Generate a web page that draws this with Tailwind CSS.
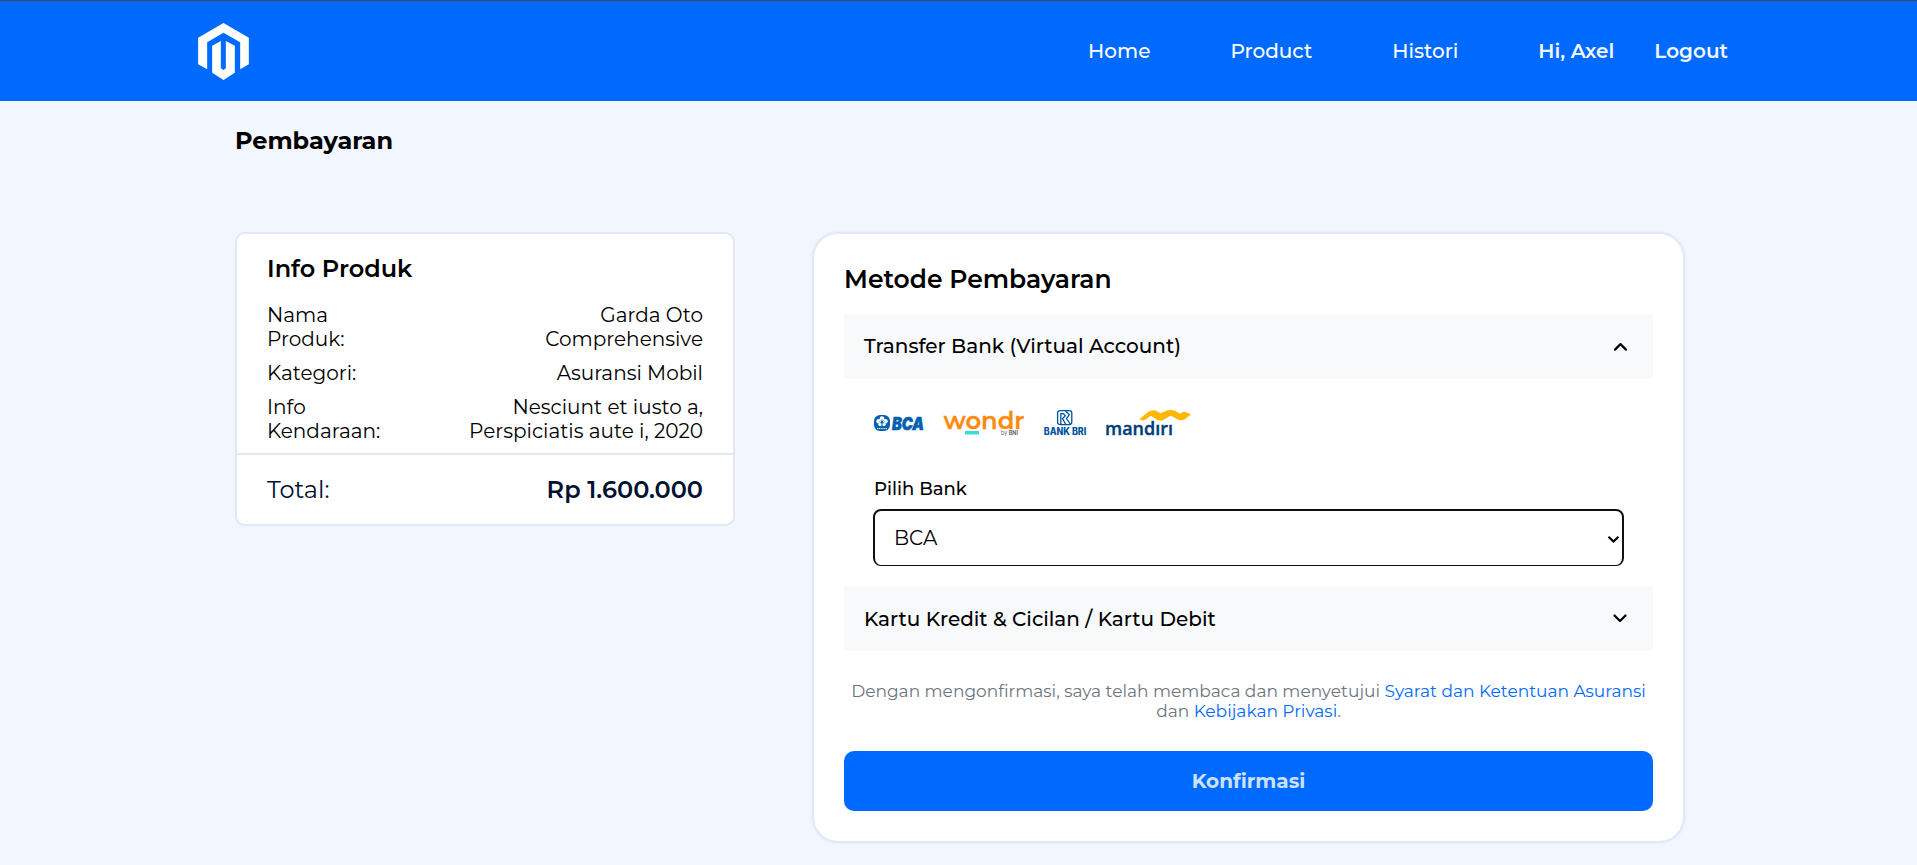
<!DOCTYPE html>
<html lang="id">
<head>
<meta charset="utf-8">
<title>Pembayaran</title>
<script src="https://cdn.jsdelivr.net/npm/@tailwindcss/browser@4"></script>
</head>
<body class="min-h-screen bg-[#f1f6ff] font-['Montserrat','Inter',sans-serif] text-black overflow-hidden">
<header class="h-[101px] bg-[#006aff] border-t border-[#444a52] flex items-center justify-between pl-[198px] pr-[189px]">
  <svg class="w-[51px] h-[57px]" viewBox="54 69 152 171" fill="#fff"><path d="M130 69 206 113V193L180 208V127L130 98 81 127V208L54 193V113Z"/><path d="M96 137 122 123V205L130 210 137 205V123L164 137V218L130 240 96 218Z"/></svg>
  <nav class="flex items-center gap-20 text-[20px] font-medium text-white">
    <a>Home</a><a>Product</a><a>Histori</a>
    <div class="flex gap-10 font-semibold text-[#f1f6ff]"><a>Hi, Axel</a><a>Logout</a></div>
  </nav>
</header>
<main class="px-[235px]">
  <h1 class="pt-[25px] h-[131px] text-[24px] leading-[30px] font-bold">Pembayaran</h1>
  <div class="flex items-start gap-[77px]">
    <section class="shrink-0 w-[500px] h-[294px] bg-white border-2 border-[#e2e8f3] rounded-[10px]">
      <div class="px-[30px] pt-5 h-[219px]">
        <h2 class="text-[24px] leading-[30px] font-semibold mb-[19px]">Info Produk</h2>
        <div class="flex flex-col gap-2.5 text-[20px] leading-6">
          <div class="flex justify-between"><div>Nama<br>Produk:</div><div class="text-right">Garda Oto<br>Comprehensive</div></div>
          <div class="flex justify-between"><div>Kategori:</div><div class="text-right">Asuransi Mobil</div></div>
          <div class="flex justify-between"><div>Info<br>Kendaraan:</div><div class="text-right">Nesciunt et iusto a,<br>Perspiciatis aute i, 2020</div></div>
        </div>
      </div>
      <div class="h-[71px] border-t-2 border-[#e2e8f3] px-[30px] flex items-center justify-between text-[24px] text-[#001230]"><span>Total:</span><span class="font-semibold">Rp 1.600.000</span></div>
    </section>
    <section class="shrink-0 w-[873px] h-[611px] bg-white border-2 border-[#e2e9f4] rounded-[26px] shadow-[0_0_3px_#e2e8f3] px-[30px] pt-[30px]">
      <h2 class="text-[25px] leading-[30px] font-semibold mb-5">Metode Pembayaran</h2>
      <div class="h-[65px] bg-[#f8f9fb] flex items-center justify-between pl-5 pr-[25px] text-[20px] font-medium"><span class="pb-0.5">Transfer Bank (Virtual Account)</span>
        <svg class="w-[15px] h-[10px]" viewBox="0 0 15 10" fill="none" stroke="#000" stroke-width="2.200" stroke-linecap="round" stroke-linejoin="round"><path d="M2 7.600 7.500 2.100 13 7.600"/></svg></div>
      <div class="h-[207px] px-[29px] pt-[31px]">
        <div class="flex items-start gap-5 h-[25px] pl-px">
          <svg class="w-[50px] h-[25px] overflow-visible" viewBox="0 0 50 25"><rect y="5" width="16" height="16" rx="6" fill="#0060af"/><g fill="#fff"><circle cx="8" cy="8.600" r="2.300"/><circle cx="4.600" cy="11.200" r="2.300"/><circle cx="11.400" cy="11.200" r="2.300"/><circle cx="6.200" cy="14.300" r="1.900"/><circle cx="9.800" cy="14.300" r="1.900"/></g><path d="M8 9v8M5.300 11.300 8 14.500l2.700-3.200" fill="none" stroke="#0060af" stroke-width=".6"/><path d="M3 18.600h10" stroke="#fff" stroke-width="1" stroke-dasharray="1.200 .6"/><text x="18" y="19.600" font-family="Inter" font-weight="900" font-style="italic" font-size="17" fill="#0060af" stroke="#0060af" stroke-width=".6" textLength="32" lengthAdjust="spacingAndGlyphs">BCA</text></svg>
          <svg class="w-[80px] h-[25px] overflow-visible" viewBox="0 0 80 25"><text x="-.5" y="18.500" font-family="Montserrat" font-weight="600" font-size="24.500" fill="#ff8a0f" stroke="#ff8a0f" stroke-width=".3" textLength="81" lengthAdjust="spacingAndGlyphs">wondr</text><rect x="21" y="21" width="14" height="3.500" fill="#40dcd3"/><text x="57" y="24.600" font-family="Inter" font-size="5.500" fill="#666" textLength="17" lengthAdjust="spacingAndGlyphs">by <tspan font-weight="700">BNI</tspan></text></svg>
          <svg class="w-[42px] h-[25px] overflow-visible" viewBox="0 0 42 25"><g fill="none" stroke="#00529c" stroke-width="1.300"><rect x="13.600" y=".6" width="14.200" height="14" rx="2.500"/><path d="M16.800 14.500V3.600H19.500L21.300 5.700 18.500 8.600 21.800 14.500M21.500 1 25.300 4.600 22.500 8.600 26.300 14"/></g><text x="-.3" y="24.700" font-family="Inter" font-weight="800" font-size="9.800" fill="#00529c" textLength="42.600" lengthAdjust="spacingAndGlyphs">BANK BRI</text></svg>
          <svg class="w-[85px] h-[25px] overflow-visible" viewBox="0 0 85 25"><path d="M33.300 9.300 42 2Q46-.2 49.500.4L54.500 3.200 61 .4Q66-.8 70 1.200L74 3.700 78 1.500 85 4.300 78.500 9.500Q75 11.300 71 9L64.500 5.500 57 10.200Q54 11.300 51 9.800L45 5.700 37.500 10.700Z" fill="#ffb700"/><text x="-1" y="24.700" font-family="Open Sans" font-weight="600" font-size="18.800" fill="#003d79" stroke="#003d79" stroke-width=".4" textLength="68" lengthAdjust="spacingAndGlyphs">mandırı</text></svg>
        </div>
        <label class="block mt-[43px] mb-[9px] text-[18px] leading-[22px] font-medium pl-px">Pilih Bank</label>
        <div class="relative h-[57px] border-2 border-b border-[#101012] rounded-lg px-[19px] flex items-center justify-between text-[20px]">BCA
          <svg class="absolute right-[2px] top-[24px] w-[13px] h-[9px]" viewBox="0 0 13 9" fill="none" stroke="#000" stroke-width="2.200"><path d="M1.500 1.700 6.500 6.500 11.500 1.700"/></svg></div>
      </div>
      <div class="h-[65px] bg-[#f8f9fb] flex items-center justify-between pl-5 pr-[25px] text-[20px] font-medium"><span>Kartu Kredit &amp; Cicilan / Kartu Debit</span>
        <svg class="w-[15px] h-[10px]" viewBox="0 0 15 10" fill="none" stroke="#000" stroke-width="2.200" stroke-linecap="round" stroke-linejoin="round"><path d="M1.500 1.500 7 7 12.500 1.500"/></svg></div>
      <p class="mt-[30px] text-center text-[17px] leading-5 text-[#6c757d] whitespace-nowrap">Dengan mengonfirmasi, saya telah membaca dan menyetujui <a class="text-[#006aff]">Syarat dan Ketentuan Asuransi</a><br>dan <a class="text-[#006aff]">Kebijakan Privasi</a>.</p>
      <button class="mt-[30px] w-full h-[60px] rounded-[10px] bg-[#006aff] text-[#cce1ff] text-[20px] font-bold">Konfirmasi</button>
    </section>
  </div>
</main>
</body>
</html>
